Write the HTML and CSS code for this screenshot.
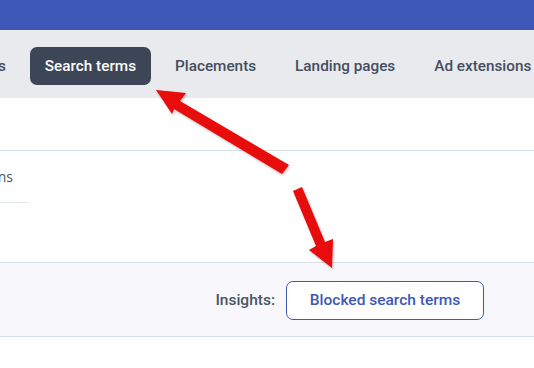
FILE: index.html
```html
<!DOCTYPE html>
<html lang="en">
<head>
    <meta charset="UTF-8">
    <meta name="viewport" content="width=device-width, initial-scale=1.0">
    <link rel="stylesheet" href="styles.css">
    <title>Search terms</title>
</head>
<body>
    <div class="topbar"></div>

    <div class="tabbar">
        <div class="tabs">
            <span class="tab">Keywords</span>
            <span class="tab active">Search terms</span>
            <span class="tab">Placements</span>
            <span class="tab">Landing pages</span>
            <span class="tab">Ad extensions</span>
        </div>
    </div>

    <div class="filters"></div>

    <div class="columns">
        <div class="column-tab"><span>Conversions</span></div>
    </div>

    <div class="insights">
        <span class="insights-label">Insights:</span>
        <a href="#" class="btn-insight">Blocked search terms</a>
    </div>

    <!-- 标注箭头 -->
    <svg class="arrows" width="534" height="368" viewBox="0 0 534 368">
        <defs>
            <filter id="shadow" x="-20%" y="-20%" width="140%" height="140%">
                <feDropShadow dx="1" dy="1.5" stdDeviation="1.2" flood-color="#000" flood-opacity="0.25"/>
            </filter>
        </defs>
        <g fill="#e80808" filter="url(#shadow)">
            <polygon points="156,90 186,93 180,101 289,165 282,174 174,109 172,114"/>
            <polygon points="332,268 309,250 316,246 293,191 302,187 325,242 333,239"/>
        </g>
    </svg>
</body>
</html>
```

FILE: styles.css
```css
body {
    margin: 0;
    width: 534px;
    height: 368px;
    overflow: hidden;
    background-color: #fff;
    font-family: Roboto, "Liberation Sans", sans-serif;
    color: #444e5e;
    position: relative;
}
.topbar {
    height: 30px;
    background-color: #3d58b6; /* 顶部蓝色条 */
}
.tabbar {
    height: 68px;
    box-sizing: border-box;
    padding-top: 4px;
    background-color: #e9eaee;
    display: flex;
    align-items: center;
    overflow: hidden;
}
.tabs {
    display: flex;
    gap: 9px;
    margin-left: -76px; /* 标签栏已向左滚动 */
    white-space: nowrap;
}
.tab {
    display: inline-flex;
    align-items: center;
    height: 38px;
    padding: 0 15px;
    border-radius: 7px;
    font-size: 15.3px;
    font-weight: 500;
    color: #444e5e;
}
.tab.active {
    background-color: #3c4656;
    color: #fff;
}
.filters {
    height: 52px;
    border-bottom: 1px solid #d6dee8;
}
.columns {
    height: 111px;
}
.column-tab {
    width: 28px;
    height: 52px;
    box-sizing: border-box;
    padding: 0 15px 0 0;
    display: flex;
    align-items: center;
    justify-content: flex-end; /* 文字向左溢出并被裁掉 */
    overflow: hidden;
    white-space: nowrap;
    font-family: "Open Sans", "Liberation Sans", sans-serif;
    font-size: 14px;
    color: #4a4f57;
    border-bottom: 1px solid #dfe5ee;
}
.column-tab span {
    flex-shrink: 0;
}
.insights {
    height: 73px;
    background-color: #f7f7fc;
    border-top: 1px solid #d9e0ea;
    border-bottom: 1px solid #d9e0ea;
    display: flex;
    align-items: center;
    justify-content: flex-end;
    padding-right: 50px;
    gap: 11px;
}
.insights-label {
    font-size: 15.5px;
    font-weight: 500;
    color: #4a5463;
    margin-top: 1px;
}
.btn-insight {
    display: inline-flex;
    align-items: center;
    justify-content: center;
    width: 198px;
    height: 39px;
    box-sizing: border-box;
    border: 1px solid #3d58b6;
    border-radius: 7px;
    color: #3d58b6;
    background-color: #fff;
    font-size: 15.5px;
    font-weight: 500;
    text-decoration: none;
    margin-top: 1px;
}
.arrows {
    position: absolute; /* 覆盖在内容上的标注 */
    top: 0;
    left: 0;
    pointer-events: none;
}
```
